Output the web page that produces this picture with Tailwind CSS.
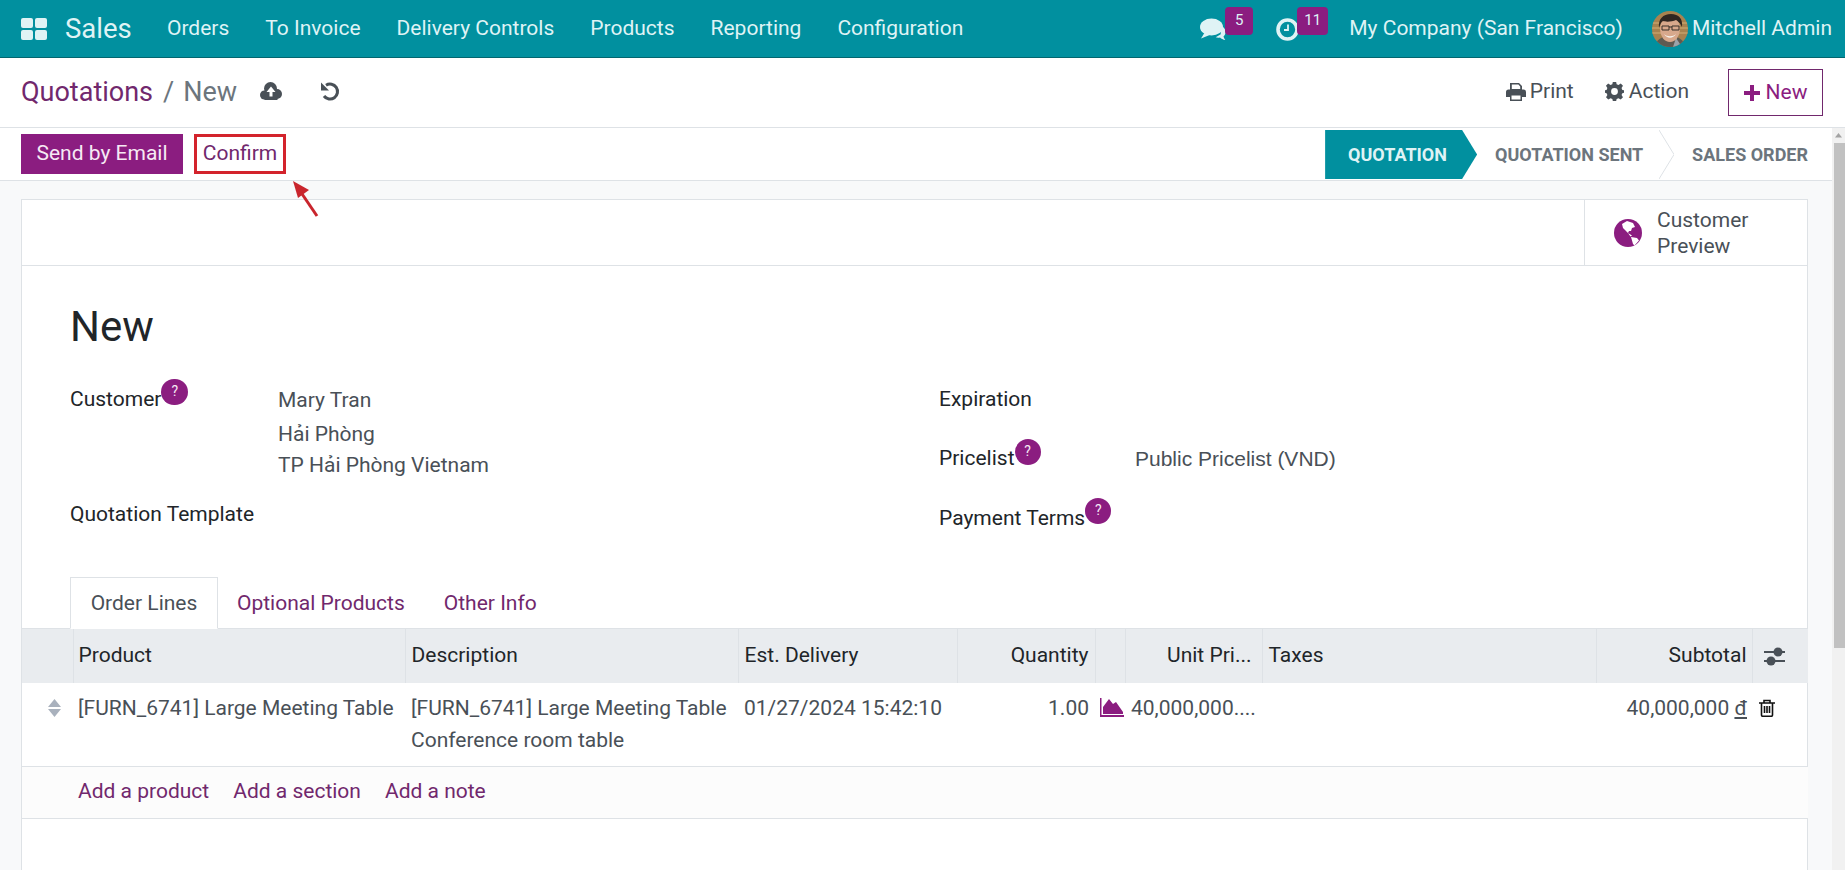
<!DOCTYPE html>
<html lang="en">
<head>
    <meta charset="UTF-8">
    <title>Quotations - New</title>
    <script src="https://cdn.jsdelivr.net/npm/@tailwindcss/browser@4"></script>
</head>
<body class="bg-white">
    <div class="h-screen overflow-hidden flex flex-col font-['Roboto',sans-serif] text-[21px] text-[#212529]">
        <!-- Navbar -->
        <header class="h-[58px] shrink-0 bg-[#01909f] border-b border-[#02666f] flex items-center text-[#dff3f5]">
            <svg class="ml-[21px] w-[26px] h-[22px]" viewBox="0 0 26 22" fill="#dff3f5">
                <rect x="0" y="0" width="12" height="10" rx="2"/><rect x="14" y="0" width="12" height="10" rx="2"/>
                <rect x="0" y="12" width="12" height="10" rx="2"/><rect x="14" y="12" width="12" height="10" rx="2"/>
            </svg>
            <span class="ml-[18px] text-[27.5px] w-[102px]">Sales</span>
            <nav class="flex gap-[36px]">
                <a>Orders</a><a>To Invoice</a><a>Delivery Controls</a><a>Products</a><a>Reporting</a><a>Configuration</a>
            </nav>
            <div class="ml-auto flex items-center h-full">
                <div class="relative w-[27px] h-[22px] mr-[49px]">
                    <svg class="w-[27px] h-[22px]" viewBox="0 0 27 22" fill="#dff3f5">
                        <path d="M21 8c3 1 5 4 4.500 7-.3 1.500-1 2.700-2 3.500.3 1.200.8 2.400 1.800 3.500-2.300-.3-4-1.200-5.300-2.500-1.500.3-3 .2-4.300-.2l5-3z"/>
                        <ellipse cx="11.500" cy="9" rx="11.500" ry="8.500"/>
                        <path d="M5 14 L1 20.500 L11 16.500z"/>
                    </svg>
                    <span class="absolute left-[25px] top-[-11px] w-[28px] h-[28px] rounded-[4px] bg-[#8b1d80] text-[15px] flex items-center justify-center">5</span>
                </div>
                <div class="relative w-[23px] h-[22px] mr-[50px]">
                    <svg class="w-[23px] h-[23px]" viewBox="0 0 23 23" fill="none" stroke="#dff3f5">
                        <circle cx="11.500" cy="11.500" r="9.500" stroke-width="3.600"/>
                        <path d="M12 6.500v5.500H8" stroke-width="1.800"/>
                    </svg>
                    <span class="absolute left-[21px] top-[-11px] w-[31px] h-[28px] rounded-[4px] bg-[#8b1d80] text-[15px] flex items-center justify-center">11</span>
                </div>
                <span>My Company (San Francisco)</span>
                <svg class="ml-[29px] w-[36px] h-[36px] rounded-full" viewBox="0 0 36 36">
                    <rect width="36" height="36" fill="#a8824f"/>
                    <path d="M0 12h36M0 17h36M0 22h36" stroke="#c4a06a" stroke-width="1.500"/>
                    <path d="M3 36c1-7 6-11 15-11s14 4 15 11z" fill="#5f5a52"/>
                    <path d="M24 27l6 9h-9z" fill="#9aa3aa"/>
                    <ellipse cx="18" cy="18" rx="10" ry="13" fill="#d8a88c"/>
                    <path d="M7 17C6 8 11 3 19 3s12 5 11 13c-2-4-4-6-6-7-4 2-11 2-13 1-2 1-3 4-4 7z" fill="#2f2621"/>
                    <path d="M10 15h7v4h-7zM20 15h7v4h-7zM17 16h3" fill="none" stroke="#39302b" stroke-width="1"/>
                    <path d="M12 23c3 3 9 3 12 0-3 5-9 5-12 0z" fill="#f5efe9"/>
                </svg>
                <span class="ml-[4px] mr-[13px]">Mitchell Admin</span>
            </div>
        </header>

        <!-- Control panel -->
        <div class="h-[70px] shrink-0 border-b border-[#dee2e6] flex items-center">
            <a class="ml-[21px] text-[27px] text-[#71286d]">Quotations</a>
            <span class="ml-[10px] text-[27px] text-[#6c757d]">/</span>
            <span class="ml-[9px] text-[27px] text-[#6c757d]">New</span>
            <svg class="ml-[23px] mb-[3px] w-[22px] h-[18px]" viewBox="0 0 22 18" fill="#495057">
                <circle cx="4.500" cy="13" r="4.500"/><circle cx="10.500" cy="6.500" r="6.500"/><circle cx="17" cy="12" r="5"/>
                <rect x="4.500" y="10" width="13" height="8"/>
                <path d="M11 4.500L6.500 10h3v4.500h3V10h3z" fill="#fff"/>
            </svg>
            <svg class="ml-[38px] mb-[3px] w-[20px] h-[20px]" viewBox="0 0 20 20" fill="none" stroke="#495057" stroke-width="3">
                <path d="M6 4.200A7.500 7.500 0 1 1 4 15"/>
                <path d="M1 1.500v8h8z" fill="#495057" stroke="none"/>
            </svg>
            <div class="ml-auto flex items-center text-[#495057]">
                <svg class="mb-[2px] w-[20px] h-[18px]" viewBox="0 0 20 18" fill="#495057">
                    <path d="M4 0h9l3 3v4H4zM5.800 1.500V6h8.400V3.600L12.400 1.500z" fill-rule="evenodd"/>
                    <path d="M2.500 6.500H17.500a2.500 2.500 0 0 1 2.500 2.500v5h-4v4H4v-4H0V9a2.500 2.500 0 0 1 2.500-2.500zM5.500 12.500v4h9v-4z" fill-rule="evenodd"/>
                </svg>
                <span class="ml-[4px] pb-[2px]">Print</span>
                <svg class="ml-[31px] mb-[2px] w-[19px] h-[19px]" viewBox="0 0 24 24" fill="#495057">
                    <path d="M10 0h4l.7 3.300 2.300 1 2.900-1.800 2.800 2.800-1.800 2.900 1 2.300L25 11v3l-3.100.700-1 2.300 1.800 2.900-2.800 2.800-2.900-1.800-2.300 1-.7 3.100h-4l-.7-3.100-2.300-1-2.900 1.800-2.800-2.800L3 17l-1-2.300L-1 14v-3l3-.500 1-2.300L1.200 5.300 4 2.500l2.900 1.800 2.300-1zM12 8.200a4.300 4.300 0 1 0 0 8.600 4.300 4.300 0 0 0 0-8.600z" fill-rule="evenodd" transform="translate(0 -.5)"/>
                </svg>
                <span class="ml-[5px] pb-[2px]">Action</span>
                <button class="ml-[39px] mr-[22px] w-[95px] h-[47px] border border-[#71286d] flex items-center justify-center text-[#8b1d80]">
                    <svg class="w-[16px] h-[16px]" viewBox="0 0 16 16" fill="#8b1d80"><path d="M6 0h4v6h6v4h-6v6H6v-6H0V6h6z"/></svg>
                    <span class="ml-[6px]">New</span>
                </button>
            </div>
        </div>

        <div class="flex-1 flex min-h-0">
            <main class="relative flex-1 min-w-0 flex flex-col">
                <!-- Status bar -->
                <div class="h-[53px] shrink-0 border-b border-[#dee2e6] flex">
                    <button class="ml-[21px] mt-[6px] w-[162px] h-[40px] bg-[#8b1d80] text-[#f6e9f4]">Send by Email</button>
                    <button class="ml-[11px] mt-[6px] w-[92px] h-[40px] border-[3px] border-[#d3232c] text-[#71286d]">Confirm</button>
                    <div class="ml-auto mr-[24px] mt-[2px] flex h-[49px] text-[18px] font-bold text-[#6c757d]">
                        <div class="w-[152px] bg-[#01909f] text-[#dff3f5] [clip-path:polygon(0_0,137px_0,100%_50%,137px_100%,0_100%)] pl-[23px] flex items-center">QUOTATION</div>
                        <div class="w-[197px] pl-[18px] flex items-center">QUOTATION SENT</div>
                        <svg class="w-[15px] h-[49px] -ml-[15px]" viewBox="0 0 15 49" fill="none" stroke="#dee2e6"><path d="M0 0l15 24.500L0 49"/></svg>
                        <div class="pl-[18px] flex items-center">SALES ORDER</div>
                    </div>
                </div>
                <!-- annotation arrow -->
                <svg class="absolute left-[285px] top-[50px] w-[40px] h-[45px]" viewBox="0 0 40 45" fill="#c9252d">
                    <path d="M32 38L13 10" stroke="#c9252d" stroke-width="3"/>
                    <path d="M8 3l16 9-11 8z"/>
                </svg>

                <!-- Form sheet -->
                <div class="flex-1 min-h-0 bg-[#f8f9fa] pl-[21px] pr-[24px] pt-[18px] overflow-hidden">
                    <div class="bg-white border border-[#dee2e6] min-h-[760px]">
                        <div class="h-[66px] border-b border-[#dee2e6] flex justify-end">
                            <div class="w-[223px] border-l border-[#dee2e6] flex items-center text-[#495057]">
                                <svg class="ml-[29px] w-[28px] h-[28px]" viewBox="0 0 28 28">
                                    <circle cx="14" cy="14" r="14" fill="#8b1d80"/>
                                    <path d="M8 5l5-3 6 2 2 4-3 1-1 3-2 0-1 2-3-3-2-2zM14 14l4 2.500-1.500 1zM17 18l6 1 2 2.500-4.500 5-1.500-1.500z" fill="#fff"/>
                                </svg>
                                <span class="ml-[15px] leading-[26px]">Customer<br>Preview</span>
                            </div>
                        </div>
                        <div class="pl-[48px]">
                            <h1 class="pt-[37px] h-[84px] text-[42px] leading-[48px]">New</h1>
                            <div class="mt-[37px] flex">
                                <div class="w-[869px]">
                                    <div class="flex">
                                        <div class="w-[208px] flex items-start h-6 leading-6">Customer<span class="-mt-[8px] w-[27px] h-[26px] rounded-full bg-[#8b1d80] text-[#f6e9f4] text-[14px] leading-[24px] text-center">?</span></div>
                                        <div class="text-[#495057] leading-6">
                                            <div class="mt-[1px]">Mary Tran</div>
                                            <div class="mt-[10px]">Hải Phòng</div>
                                            <div class="mt-[7px]">TP Hải Phòng Vietnam</div>
                                        </div>
                                    </div>
                                    <div class="mt-[25px] leading-6">Quotation Template</div>
                                </div>
                                <div class="leading-6">
                                    <div>Expiration</div>
                                    <div class="mt-[35px] flex items-start">
                                        <div class="w-[196px] flex items-start">Pricelist<span class="-mt-[7px] w-[26px] h-[26px] rounded-full bg-[#8b1d80] text-[#f6e9f4] text-[14px] leading-[24px] text-center">?</span></div>
                                        <div class="mt-[1px] font-['Liberation_Sans',sans-serif] text-[#495057]">Public Pricelist (VND)</div>
                                    </div>
                                    <div class="mt-[35px] flex items-start">Payment Terms<span class="-mt-[8px] w-[26px] h-[26px] rounded-full bg-[#8b1d80] text-[#f6e9f4] text-[14px] leading-[24px] text-center">?</span></div>
                                </div>
                            </div>
                        </div>

                        <!-- Tabs -->
                        <div class="mt-[47px] pl-[48px] h-[52px] border-b border-[#dee2e6] flex text-[#71286d]">
                            <div class="w-[148px] h-[52px] pt-[2px] border border-b-white border-[#dee2e6] bg-white text-[#495057] flex items-center justify-center">Order Lines</div>
                            <div class="ml-[19px] pt-[2px] flex items-center">Optional Products</div>
                            <div class="ml-[39px] pt-[2px] flex items-center">Other Info</div>
                        </div>

                        <!-- Order lines -->
                        <table class="w-full table-fixed">
                            <colgroup>
                                <col class="w-[51px]"><col class="w-[332px]"><col class="w-[333px]"><col class="w-[219px]"><col class="w-[138px]"><col class="w-[30px]"><col class="w-[137px]"><col class="w-[334px]"><col class="w-[156px]"><col class="w-[56px]">
                            </colgroup>
                            <thead class="bg-[#e9ecef]">
                                <tr class="h-[54px] font-normal">
                                    <th></th>
                                    <th class="border-l border-[#dee2e6] px-[5px] text-left font-normal">Product</th>
                                    <th class="border-l border-[#dee2e6] px-[6px] text-left font-normal">Description</th>
                                    <th class="border-l border-[#dee2e6] px-[6px] text-left font-normal">Est. Delivery</th>
                                    <th class="border-l border-[#dee2e6] px-[6px] text-right font-normal">Quantity</th>
                                    <th class="border-l border-[#dee2e6]"></th>
                                    <th class="border-l border-[#dee2e6] pr-[10px] text-right font-normal whitespace-nowrap">Unit Pri...</th>
                                    <th class="border-l border-[#dee2e6] px-[6px] text-left font-normal">Taxes</th>
                                    <th class="border-l border-[#dee2e6] px-[5px] text-right font-normal">Subtotal</th>
                                    <th class="border-l border-[#dee2e6]">
                                        <svg class="ml-[11px] w-[21px] h-[19px]" viewBox="0 0 21 19" fill="#495057">
                                            <rect y="4" width="21" height="2"/><rect y="13" width="21" height="2"/>
                                            <circle cx="14" cy="5" r="4.500"/><circle cx="7" cy="14" r="4.500"/>
                                        </svg>
                                    </th>
                                </tr>
                            </thead>
                            <tbody class="text-[#495057]">
                                <tr class="h-[83px] border-b border-[#dee2e6] align-top">
                                    <td class="pt-[16px]">
                                        <svg class="ml-[26px] w-[13px] h-[18px]" viewBox="0 0 13 18" fill="#a9b1bd"><path d="M6.500 0L13 8H0zM0 10h13l-6.500 8z"/></svg>
                                    </td>
                                    <td class="px-[5px] pt-[13px] leading-6 whitespace-nowrap">[FURN_6741] Large Meeting Table</td>
                                    <td class="px-[6px] pt-[13px] leading-6 whitespace-nowrap">[FURN_6741] Large Meeting Table<div class="mt-2">Conference room table</div></td>
                                    <td class="px-[6px] pt-[13px] leading-6 whitespace-nowrap">01/27/2024 15:42:10</td>
                                    <td class="px-[6px] pt-[13px] leading-6 text-right">1.00</td>
                                    <td class="pt-[15px]">
                                        <svg class="ml-[5px] w-[24px] h-[19px]" viewBox="0 0 24 19" fill="#8b1d80">
                                            <path d="M0 0h1.500v17H24v2H0z"/><path d="M3 16V9L9 1l4 5 3-2 7 10v2z"/>
                                        </svg>
                                    </td>
                                    <td class="pl-[6px] pt-[13px] leading-6 whitespace-nowrap">40,000,000....</td>
                                    <td></td>
                                    <td class="px-[5px] pt-[13px] leading-6 text-right whitespace-nowrap">40,000,000 <span class="underline">đ</span></td>
                                    <td class="pt-[16px]">
                                        <svg class="ml-[7px] w-[16px] h-[18px]" viewBox="0 0 16 18" fill="none" stroke="#111" stroke-width="1.600">
                                            <path d="M0 4h16M5 4V1.500h6V4M2.500 4v12a1.200 1.200 0 0 0 1.200 1.200h8.600a1.200 1.200 0 0 0 1.200-1.200V4M5.500 7v7M8 7v7M10.500 7v7"/>
                                        </svg>
                                    </td>
                                </tr>
                                <tr class="h-[52px] border-b border-[#dee2e6] bg-[#fcfcfc] text-[#71286d]">
                                    <td></td>
                                    <td colspan="9" class="px-[5px]">
                                        <a>Add a product</a><a class="ml-[24px]">Add a section</a><a class="ml-[24px]">Add a note</a>
                                    </td>
                                </tr>
                            </tbody>
                        </table>
                    </div>
                </div>
            </main>

            <!-- Scrollbar -->
            <div class="w-[13px] shrink-0 bg-[#f1f1f1]">
                <svg class="w-[13px] h-[15px]" viewBox="0 0 13 15" fill="#a3a3a3"><path d="M6.500 5L10 9.500H3z"/></svg>
                <div class="ml-[2px] h-[505px] bg-[#c1c1c1]"></div>
            </div>
        </div>
    </div>
</body>
</html>
